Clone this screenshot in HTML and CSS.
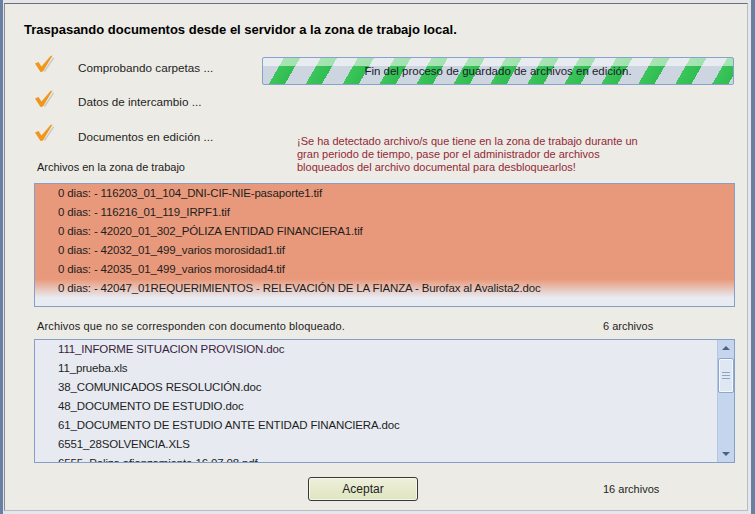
FILE: index.html
```html
<!DOCTYPE html>
<html lang="es">
<head>
    <meta charset="UTF-8">
    <title>Traspaso de documentos</title>
    <link rel="stylesheet" href="styles.css">
</head>
<body>

<div class="window">
    <div class="frame">
        <div class="panel">
            <h1 class="title">Traspasando documentos desde el servidor a la zona de trabajo local.</h1>

            <div class="status">
                <div class="steps">
                    <div class="step">
                        <svg class="check" width="20" height="20" viewBox="0 0 20 20"><path d="M10.5 17.5 L19.5 4" stroke="#c9c9c9" stroke-width="1.4" fill="none"/><path d="M1 9.5 L4.5 8 L7.5 12.5 L16.5 2 L18.5 1.5 L9 17.5 L6.5 18 Z" fill="#f0961c"/></svg>
                        <span>Comprobando carpetas ...</span>
                    </div>
                    <div class="step">
                        <svg class="check" width="20" height="20" viewBox="0 0 20 20"><path d="M10.5 17.5 L19.5 4" stroke="#c9c9c9" stroke-width="1.4" fill="none"/><path d="M1 9.5 L4.5 8 L7.5 12.5 L16.5 2 L18.5 1.5 L9 17.5 L6.5 18 Z" fill="#f0961c"/></svg>
                        <span>Datos de intercambio ...</span>
                    </div>
                    <div class="step">
                        <svg class="check" width="20" height="20" viewBox="0 0 20 20"><path d="M10.5 17.5 L19.5 4" stroke="#c9c9c9" stroke-width="1.4" fill="none"/><path d="M1 9.5 L4.5 8 L7.5 12.5 L16.5 2 L18.5 1.5 L9 17.5 L6.5 18 Z" fill="#f0961c"/></svg>
                        <span>Documentos en edición ...</span>
                    </div>
                    <div class="caption">Archivos en la zona de trabajo</div>
                </div>

                <div class="progress-col">
                    <div class="progress">
                        <span>Fin del proceso de guardado de archivos en edición.</span>
                    </div>
                    <p class="warning">¡Se ha detectado archivo/s que tiene en la zona de trabajo durante un<br>gran periodo de tiempo, pase por el administrador de archivos<br>bloqueados del archivo documental para desbloquearlos!</p>
                </div>
            </div>

            <ul class="list list-locked">
                <li>0 dias: - 116203_01_104_DNI-CIF-NIE-pasaporte1.tif</li>
                <li>0 dias: - 116216_01_119_IRPF1.tif</li>
                <li>0 dias: - 42020_01_302_PÓLIZA ENTIDAD FINANCIERA1.tif</li>
                <li>0 dias: - 42032_01_499_varios morosidad1.tif</li>
                <li>0 dias: - 42035_01_499_varios morosidad4.tif</li>
                <li>0 dias: - 42047_01REQUERIMIENTOS - RELEVACIÓN DE LA FIANZA - Burofax al Avalista2.doc</li>
            </ul>

            <div class="caption-row">
                <span class="caption">Archivos que no se corresponden con documento bloqueado.</span>
                <span class="count">6 archivos</span>
            </div>

            <div class="list list-free">
                <ul>
                    <li class="first">111_INFORME SITUACION PROVISION.doc</li>
                    <li>11_prueba.xls</li>
                    <li>38_COMUNICADOS RESOLUCIÓN.doc</li>
                    <li>48_DOCUMENTO DE ESTUDIO.doc</li>
                    <li>61_DOCUMENTO DE ESTUDIO ANTE ENTIDAD FINANCIERA.doc</li>
                    <li>6551_28SOLVENCIA.XLS</li>
                    <li>6555_Poliza afianzamiento 16.07.08.pdf</li>
                </ul>
                <div class="scrollbar">
                    <div class="arrow arrow-up"></div>
                    <div class="thumb"><i></i><i></i><i></i></div>
                    <div class="track"></div>
                    <div class="arrow arrow-down"></div>
                </div>
            </div>

            <div class="footer">
                <button type="button" class="ok-button">Aceptar</button>
                <span class="count">16 archivos</span>
            </div>
        </div>
    </div>
</div>

</body>
</html>
```

FILE: styles.css
```css
/* Reset */
* {
    margin: 0;
    padding: 0;
    box-sizing: border-box;
}

body {
    font-family: "Liberation Sans", Arial, sans-serif;
    font-size: 12px;
    color: #1e1e1e;
    background-color: #6b7fa3;
}

/* Window frame */
.window {
    width: 755px;
    height: 514px;
    padding: 0 4px 0 3px;
    background-color: #6b7fa3;
}

.frame {
    height: 100%;
    padding: 3px 3px 3px 1px;
    background-color: #e4e6ec;
}

.panel {
    height: 100%;
    padding: 18px 12px 0 19px;
    background-color: #ecebe5;
    border: 1px solid #8c8c8c;
    border-top-color: #6e6e6e;
    border-right-color: #b9bcc4;
    border-bottom-color: #b9bcc4;
}

/* Title */
.title {
    font-size: 13px;
    line-height: 16px;
    font-weight: bold;
    color: #000;
}

/* Steps + progress */
.status {
    display: grid;
    grid-template-columns: 238px 472px;
    margin-top: 19px;
}

.steps {
    display: flex;
    flex-direction: column;
    gap: 14.5px;
}

.step {
    display: flex;
    align-items: center;
    height: 20px;
    padding-left: 10px;
    font-size: 11.7px;
}

.check {
    margin-top: -6px;
    margin-right: 24px;
}

.caption {
    font-size: 11px;
    line-height: 14px;
    color: #222;
}

.steps .caption {
    margin-top: -0.5px;
    margin-left: 13px;
}

.progress {
    height: 28px;
    border: 1px solid #86a2cf;
    border-radius: 2px;
    display: flex;
    align-items: center;
    justify-content: center;
    font-size: 11.5px;
    background:
        linear-gradient(to bottom, rgba(255, 255, 255, 0.55) 0, rgba(255, 255, 255, 0.55) 30%, rgba(255, 255, 255, 0) 31%),
        repeating-linear-gradient(120deg, #cdd5e1 0, #cdd5e1 18px, #3cc55b 18px, #2fbd50 32px);
    color: #1c1c2c;
}

.warning {
    margin-top: 50px;
    margin-left: 35px;
    font-size: 11px;
    line-height: 13px;
    color: #952837;
}

/* Lists */
.list {
    margin-left: 10px;
    height: 124px;
    border: 1px solid #84a0c8;
    list-style: none;
}

.list li {
    height: 19px;
    line-height: 19px;
    padding-left: 23px;
    white-space: nowrap;
    font-size: 11.5px;
    letter-spacing: -0.15px;
}

.list-locked {
    margin-top: 9px;
    background: linear-gradient(to bottom, #e8997b 0, #e8997b 78%, #e8ebf2 93%, #e8ebf2 100%);
}

.caption-row {
    display: grid;
    grid-template-columns: 569px 1fr;
    margin-top: 12px;
    margin-left: 10px;
}

.caption-row .caption {
    padding-left: 3px;
    letter-spacing: 0.15px;
}

.count {
    font-size: 11px;
    line-height: 14px;
}

.list-free {
    display: flex;
    margin-top: 6px;
    background-color: #e7eaf1;
    overflow: hidden;
}

.list-free ul {
    flex: 1;
    list-style: none;
    overflow: hidden;
}

.list-free li.first {
    color: #3a1e3e;
}

/* Scrollbar */
.scrollbar {
    width: 17px;
    display: flex;
    flex-direction: column;
    background-color: #c4d5ed;
    border-left: 1px solid #b4c7e2;
}

.arrow {
    height: 17px;
    position: relative;
}

.arrow::after {
    content: "";
    position: absolute;
    left: 4px;
    top: 6px;
    border-left: 4px solid transparent;
    border-right: 4px solid transparent;
}

.arrow-up::after {
    border-bottom: 4px solid #4d6185;
}

.arrow-down::after {
    top: 7px;
    border-top: 4px solid #4d6185;
}

.thumb {
    height: 35px;
    margin: 1px 0 0 0;
    background-color: #dfe7f3;
    border: 1px solid #8ea7cc;
    box-shadow: inset 0 0 0 1px #f4f7fc;
    border-radius: 2px;
    display: flex;
    flex-direction: column;
    justify-content: center;
    align-items: center;
    gap: 2px;
}

.thumb i {
    display: block;
    width: 8px;
    height: 1px;
    background-color: #8ea3c4;
}

.track {
    flex: 1;
}

/* Footer */
.footer {
    display: flex;
    align-items: center;
    margin-top: 14px;
    margin-left: 10px;
}

.ok-button {
    width: 110px;
    height: 24px;
    margin-left: 274px;
    font-family: "Liberation Sans", Arial, sans-serif;
    font-size: 12px;
    color: #222;
    background: linear-gradient(to bottom, #eef0dc, #dfe5bf);
    border: 1px solid #383838;
    border-radius: 3px;
    box-shadow: inset 0 0 0 1px #f6f7ec;
}

.footer .count {
    margin-left: 185px;
}
```
